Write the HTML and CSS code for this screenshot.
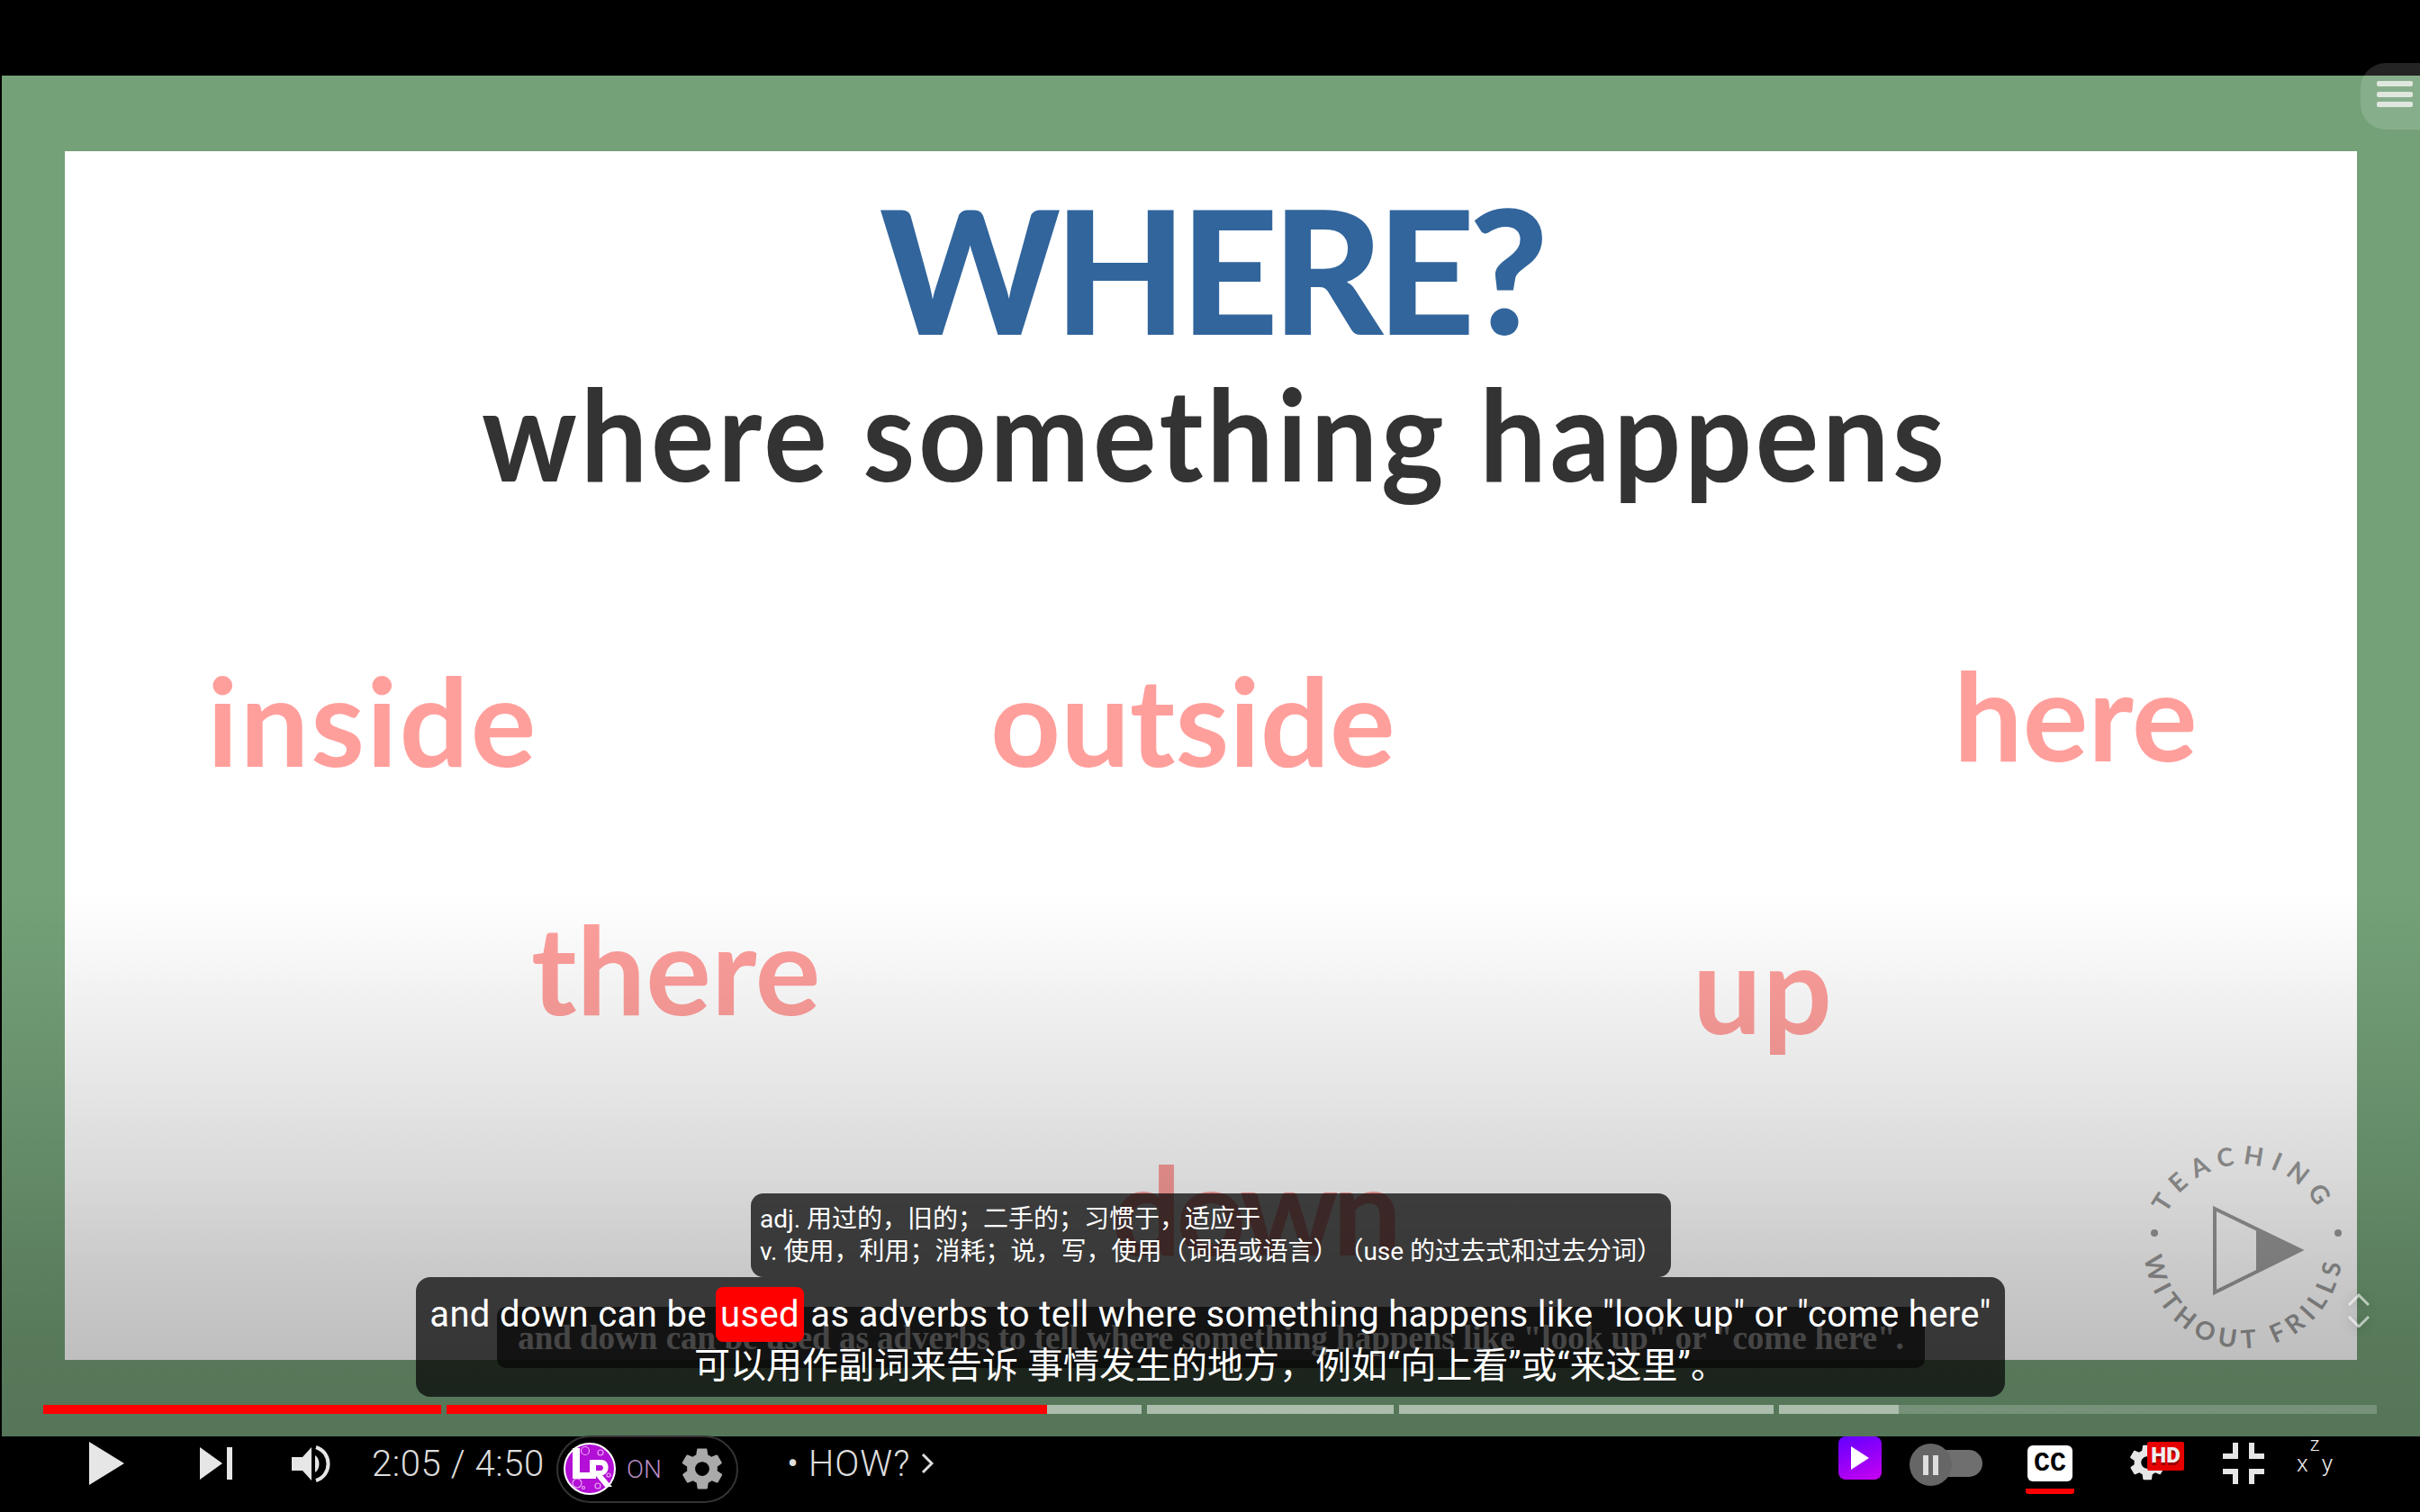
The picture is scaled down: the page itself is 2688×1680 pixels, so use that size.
FILE: index.html
```html
<!DOCTYPE html>
<html lang="en">
<head>
    <meta charset="UTF-8">
    <meta name="viewport" content="width=device-width, initial-scale=1.0">
    <title>Adverbs of place - video player</title>
    <link rel="stylesheet" href="styles.css">
</head>
<body>
    <div class="top-bar"></div>

    <div class="video">
        <div class="slide">
            <h1 class="slide-title">WHERE?</h1>
            <h2 class="slide-sub">where something happens</h2>
            <span class="word word-inside">inside</span>
            <span class="word word-outside">outside</span>
            <span class="word word-here">here</span>
            <span class="word word-there">there</span>
            <span class="word word-up">up</span>
            <span class="word word-down">down</span>

            <svg class="channel-logo" viewBox="0 0 240 240">
                <defs>
                    <path id="arc-top" d="M 26 120 A 94 94 0 0 1 214 120"></path>
                    <path id="arc-bottom" d="M 10 120 A 110 110 0 0 0 230 120"></path>
                </defs>
                <text class="logo-text logo-top"><textPath href="#arc-top" startOffset="50%" text-anchor="middle">TEACHING</textPath></text>
                <text class="logo-text logo-bottom"><textPath href="#arc-bottom" startOffset="50%" text-anchor="middle">WITHOUT FRILLS</textPath></text>
                <circle cx="21" cy="102" r="4" fill="#9a9a9a"></circle>
                <circle cx="225" cy="102" r="4" fill="#9a9a9a"></circle>
                <path d="M88 75 L183 121 L88 168 Z" fill="none" stroke="#9a9a9a" stroke-width="4"></path>
                <path d="M134 98 L183 121 L134 145 Z" fill="#9a9a9a"></path>
            </svg>
        </div>

        <div class="shade"></div>

        <div class="native-caption">and down can be used as adverbs to tell where something happens like "look up" or "come here".</div>

        <div class="tooltip">
            <div>adj. 用过的，旧的；二手的；习惯于，适应于</div>
            <div>v. 使用，利用；消耗；说，写，使用（词语或语言）（use 的过去式和过去分词）</div>
        </div>

        <div class="caption">
            <div class="caption-en">and down can be <span class="word-hit">used</span> as adverbs to tell where something happens like "look up" or "come here"</div>
            <div class="caption-zh">可以用作副词来告诉 事情发生的地方，例如“向上看”或“来这里”。</div>
        </div>

        <div class="menu-btn">
            <span class="menu-line"></span>
            <span class="menu-line"></span>
            <span class="menu-line"></span>
        </div>

        <svg class="resize-arrows" viewBox="0 0 24 38">
            <path d="M1 13 L12 2 L23 13"></path>
            <path d="M1 26 L12 37 L23 26"></path>
        </svg>

        <div class="progress">
            <div class="segment seg-1"></div>
            <div class="segment seg-2"></div>
            <div class="segment seg-3"></div>
            <div class="segment seg-4"></div>
            <div class="segment seg-5"><div class="buffer" style="width: 20%"></div></div>
        </div>
    </div>

    <div class="controls">
        <svg class="ctl ctl-play" viewBox="0 0 39 48"><path d="M0 0 L39 24 L0 48 Z"></path></svg>
        <svg class="ctl ctl-next" viewBox="0 0 36 36"><path d="M0 0 L25 18 L0 36 Z M30 0 H36 V36 H30 Z"></path></svg>
        <svg class="ctl ctl-volume" viewBox="0 0 43 41">
            <path d="M0 13 H12 L22 2 V39 L12 28 H0 Z M26 11 C32 15 32 26 26 30 Z"></path>
            <path class="vol-arc" d="M27 2 C45 8 45 33 27 39"></path>
        </svg>
        <span class="time">2:05 / 4:50</span>

        <div class="lr-pill">
            <svg class="lr-logo" viewBox="0 0 58 58">
                <circle cx="29" cy="29" r="28" fill="#b30fd6" stroke="#fff" stroke-width="2"></circle>
                <g fill="none" stroke="#e6a9f0" stroke-width="1.200">
                    <circle cx="24" cy="9" r="4.500"></circle>
                    <circle cx="41" cy="11" r="3"></circle>
                    <circle cx="15" cy="45" r="5"></circle>
                    <circle cx="22" cy="50" r="1.500"></circle>
                    <circle cx="38" cy="48" r="3"></circle>
                    <circle cx="50" cy="36" r="2"></circle>
                </g>
                <path d="M10 6 H18 V33 H36 V40 H10 Z" fill="#fff"></path>
                <path d="M29 19 H42 C52 19 52 35 43 36 L54 49 H46 L36 37 V40 H29 Z M36 25 V31 H41 C45 31 45 25 41 25 Z" fill="#fff" fill-rule="evenodd"></path>
            </svg>
            <span class="lr-on">ON</span>
            <svg class="lr-gear" viewBox="0 0 24 24"><path d="M19.4 13c.1-.3.1-.7.1-1s0-.7-.1-1l2.100-1.600c.2-.2.2-.4.1-.6l-2-3.500c-.1-.2-.4-.3-.6-.2l-2.500 1c-.5-.4-1.100-.7-1.700-1l-.4-2.700c0-.2-.2-.4-.5-.4h-4c-.3 0-.5.2-.5.4l-.4 2.700c-.6.3-1.200.6-1.700 1l-2.500-1c-.2-.1-.5 0-.6.2l-2 3.500c-.1.2-.1.4.1.6L4.600 11c-.1.3-.1.7-.1 1s0 .7.1 1l-2.100 1.600c-.2.2-.2.4-.1.600l2 3.500c.1.2.4.3.6.2l2.500-1c.5.4 1.100.7 1.700 1l.4 2.700c0 .2.2.4.5.4h4c.3 0 .5-.2.5-.4l.4-2.700c.6-.3 1.200-.6 1.700-1l2.500 1c.2.1.5 0 .6-.2l2-3.500c.1-.2.1-.4-.1-.6L19.400 13zM12 15.500c-1.900 0-3.500-1.600-3.500-3.500s1.600-3.500 3.500-3.500 3.500 1.600 3.500 3.500-1.600 3.500-3.500 3.500z" fill-rule="evenodd"></path></svg>
        </div>

        <span class="chapter"><span class="chapter-dot">•</span>HOW?<svg class="chapter-arrow" viewBox="0 0 14 24"><path d="M2 2 L12 12 L2 22"></path></svg></span>

        <div class="controls-right">
            <div class="ext-btn"><svg viewBox="0 0 20 26"><path d="M0 0 L20 13 L0 26 Z"></path></svg></div>

            <div class="autoplay">
                <div class="autoplay-track"></div>
                <div class="autoplay-knob"><span class="pause-bar"></span><span class="pause-bar"></span></div>
            </div>

            <div class="cc-btn"><span class="cc-label">CC</span></div>

            <div class="hd-btn">
                <svg class="hd-gear" viewBox="0 0 24 24"><path d="M19.4 13c.1-.3.1-.7.1-1s0-.7-.1-1l2.100-1.600c.2-.2.2-.4.1-.6l-2-3.500c-.1-.2-.4-.3-.6-.2l-2.500 1c-.5-.4-1.100-.7-1.700-1l-.4-2.700c0-.2-.2-.4-.5-.4h-4c-.3 0-.5.2-.5.4l-.4 2.700c-.6.3-1.200.6-1.700 1l-2.500-1c-.2-.1-.5 0-.6.2l-2 3.500c-.1.2-.1.4.1.6L4.600 11c-.1.3-.1.7-.1 1s0 .7.1 1l-2.100 1.600c-.2.2-.2.4-.1.600l2 3.500c.1.2.4.3.6.2l2.500-1c.5.4 1.100.7 1.700 1l.4 2.700c0 .2.2.4.5.4h4c.3 0 .5-.2.5-.4l.4-2.700c.6-.3 1.200-.6 1.700-1l2.500 1c.2.1.5 0 .6-.2l2-3.500c.1-.2.1-.4-.1-.6L19.400 13zM12 15.500c-1.900 0-3.500-1.600-3.500-3.500s1.600-3.500 3.500-3.500 3.500 1.600 3.500 3.500-1.600 3.500-3.500 3.500z" fill-rule="evenodd"></path></svg>
                <span class="hd-badge">HD</span>
            </div>

            <svg class="ctl ctl-exit" viewBox="0 0 46 46"><path d="M11 0 H17 V18 H0 V12 H11 Z M29 0 H35 V12 H46 V18 H29 Z M0 29 H17 V46 H11 V35 H0 Z M29 29 H46 V35 H35 V46 H29 Z"></path></svg>

            <div class="xy-btn">
                <span class="xy-top">z</span>
                <span class="xy-row"><span>x</span><span>y</span></span>
            </div>
        </div>
    </div>
</body>
</html>
```

FILE: styles.css
```css
* {
    box-sizing: border-box;
}

body {
    margin: 0;
    width: 2688px;
    height: 1680px;
    display: flex;
    flex-direction: column;
    background-color: #000;
    font-family: Roboto, 'Noto Sans CJK SC', sans-serif;
    overflow: hidden;
}

.top-bar {
    height: 84px;
    background-color: #000;
}

/* Video frame */
.video {
    position: relative;
    height: 1512px;
    padding: 84px 70px 85px 70px;
    background-color: #74a178;
    border-left: 2px solid #000;
}

.slide {
    position: relative;
    width: 2546px;
    height: 1343px;
    background-color: #fff;
}

.slide-title,
.slide-sub,
.word {
    position: absolute;
    margin: 0;
    font-family: Lato, sans-serif;
    white-space: nowrap;
}

.slide-title {
    left: 905px;
    top: 16px;
    font-size: 190px;
    font-weight: 900;
    line-height: 1.2;
    letter-spacing: -7px;
    color: #31659c;
}

.slide-sub {
    left: 463px;
    top: 227px;
    font-size: 142px;
    font-weight: 700;
    line-height: 1.2;
    letter-spacing: 4px;
    color: #333;
    transform: scaleX(0.93);
    transform-origin: left center;
}

.word {
    font-size: 136px;
    font-weight: 700;
    line-height: 1.2;
    letter-spacing: 0;
    color: #ff9f9c;
}

.word-inside { left: 158px; top: 550px; letter-spacing: 2px; }
.word-outside { left: 1028px; top: 550px; }
.word-here { left: 2098px; top: 544px; }
.word-there { left: 518px; top: 826px; }
.word-up { left: 1808px; top: 847px; letter-spacing: 1px; }
.word-down { left: 1163px; top: 1093px; letter-spacing: -6px; }

.channel-logo {
    position: absolute;
    left: 2300px;
    top: 1100px;
    width: 240px;
    height: 240px;
}

.logo-text {
    font-family: Lato, sans-serif;
    font-size: 28px;
    font-weight: 700;
    fill: #9a9a9a;
}

.logo-top {
    letter-spacing: 9px;
}

.logo-bottom {
    letter-spacing: 7px;
}

/* bottom darkening of the player */
.shade {
    position: absolute;
    left: -2px;
    right: 0;
    top: 0;
    bottom: 0;
    background: linear-gradient(to bottom, rgba(0, 0, 0, 0) 60%, rgba(0, 0, 0, 0.14) 80%, rgba(0, 0, 0, 0.21) 88%, rgba(0, 0, 0, 0.25) 94%, rgba(0, 0, 0, 0.27) 100%);
}

/* Subtitles */
.native-caption {
    position: absolute;
    left: 550px;
    top: 1368px;
    width: 1586px;
    height: 68px;
    padding-top: 13px;
    background-color: rgba(8, 8, 8, 0.75);
    border-radius: 10px;
    font-family: 'Liberation Serif', serif;
    font-size: 37px;
    font-weight: 700;
    color: #fff;
    text-align: center;
    white-space: nowrap;
}

.caption {
    position: absolute;
    left: 460px;
    top: 1335px;
    width: 1765px;
    height: 133px;
    padding-top: 11px;
    background-color: rgba(8, 8, 8, 0.75);
    border-radius: 16px;
    color: #fff;
    text-align: center;
    white-space: nowrap;
}

.caption-en {
    font-family: Roboto, sans-serif;
    font-size: 40px;
    font-weight: 400;
    line-height: 61px;
    letter-spacing: 0.36px;
}

.word-hit {
    display: inline-block;
    margin-right: -3px;
    padding: 0 5px;
    background-color: #f00;
    border-radius: 8px;
}

.caption-zh {
    font-family: Roboto, 'Noto Sans CJK SC', sans-serif;
    font-size: 40px;
    line-height: 54px;
    text-spacing-trim: space-all;
}

.tooltip {
    position: absolute;
    left: 832px;
    top: 1242px;
    width: 1022px;
    height: 93px;
    padding: 11px 10px 0;
    background-color: rgba(8, 8, 8, 0.75);
    border-radius: 14px;
    font-family: Roboto, 'Noto Sans CJK SC', sans-serif;
    font-size: 28px;
    line-height: 36px;
    color: #fff;
    white-space: nowrap;
    text-spacing-trim: space-all;
}

.menu-btn {
    position: absolute;
    right: 0;
    top: -14px;
    width: 66px;
    height: 74px;
    padding: 20px 8px 0 18px;
    display: flex;
    flex-direction: column;
    gap: 5.500px;
    background-color: rgba(255, 255, 255, 0.14);
    border-radius: 28px 0 0 28px;
}

.menu-line {
    height: 6px;
    background-color: #dfe7df;
    border-radius: 2px;
}

.resize-arrows {
    position: absolute;
    left: 2606px;
    top: 1353px;
    width: 24px;
    height: 38px;
    fill: none;
    stroke: rgba(255, 255, 255, 0.6);
    stroke-width: 3;
    filter: drop-shadow(0 2px 6px rgba(0, 0, 0, 0.4));
}

/* Chapter progress bar */
.progress {
    position: absolute;
    left: 46px;
    top: 1477px;
    display: flex;
    gap: 6px;
    height: 10px;
}

.segment {
    display: flex;
    height: 10px;
    background-color: rgba(255, 255, 255, 0.2);
}

.seg-1 { width: 442px; background-color: #f00; }
.seg-2 { width: 772px; background: linear-gradient(to right, #f00 667px, #abbdac 667px); }
.seg-3 { width: 274px; background-color: #abbdac; }
.seg-4 { width: 416px; background-color: #abbdac; }
.seg-5 { width: 664px; }

.buffer {
    height: 100%;
    background-color: #abbdac;
}

/* Bottom controls */
.controls {
    position: relative;
    display: flex;
    align-items: center;
    height: 84px;
    padding-left: 99px;
    color: #ddd;
}

.ctl {
    flex: none;
    fill: #e6e6e6;
}

.ctl-play {
    width: 39px;
    height: 48px;
    margin-top: -24px;
}

.ctl-next {
    width: 36px;
    height: 36px;
    margin-left: 84px;
    margin-top: -24px;
}

.ctl-volume {
    width: 43px;
    height: 41px;
    margin-left: 66px;
    margin-top: -24px;
}

.vol-arc {
    fill: none;
    stroke: #e6e6e6;
    stroke-width: 4;
}

.time {
    flex: none;
    width: 190px;
    margin-left: 46px;
    margin-top: -24px;
    font-size: 40px;
    font-weight: 300;
    letter-spacing: 0.6px;
    color: #ddd;
    white-space: nowrap;
}

.lr-pill {
    flex: none;
    display: flex;
    align-items: center;
    width: 202px;
    height: 75px;
    margin-left: 15px;
    margin-top: -12px;
    padding-left: 6px;
    border: 2px solid #333;
    border-radius: 38px;
}

.lr-logo {
    flex: none;
    width: 58px;
    height: 58px;
}

.lr-on {
    margin-left: 12px;
    font-size: 28px;
    font-weight: 300;
    color: #b88bc0;
}

.lr-gear {
    flex: none;
    width: 54px;
    height: 54px;
    margin-left: 18px;
    fill: #aaa;
}

.chapter {
    display: flex;
    align-items: center;
    margin-left: 54px;
    margin-top: -24px;
    font-size: 40px;
    font-weight: 300;
    letter-spacing: 1px;
    white-space: nowrap;
}

.chapter-dot {
    margin-right: 10px;
}

.chapter-arrow {
    width: 14px;
    height: 24px;
    margin-left: 12px;
    fill: none;
    stroke: #ddd;
    stroke-width: 3;
}

.controls-right {
    position: absolute;
    left: 0;
    right: 0;
    top: 0;
    bottom: 0;
}

.ext-btn {
    position: absolute;
    left: 2042px;
    top: 0;
    width: 48px;
    height: 48px;
    display: flex;
    align-items: center;
    justify-content: center;
    background: linear-gradient(160deg, #6200ff, #c800f0);
    border-radius: 8px;
}

.ext-btn svg {
    width: 20px;
    height: 26px;
    fill: #fff;
}

.autoplay {
    position: absolute;
    left: 2121px;
    top: 8px;
    width: 81px;
    height: 47px;
}

.autoplay-track {
    position: absolute;
    left: 35px;
    top: 7px;
    width: 46px;
    height: 30px;
    background-color: #6f6f6f;
    border-radius: 0 15px 15px 0;
}

.autoplay-knob {
    position: absolute;
    left: 0;
    top: 0;
    width: 47px;
    height: 47px;
    display: flex;
    align-items: center;
    justify-content: center;
    gap: 5px;
    background-color: #666;
    border-radius: 50%;
}

.pause-bar {
    width: 6px;
    height: 22px;
    background-color: #ddd;
}

.cc-btn {
    position: absolute;
    left: 2250px;
    top: 10px;
    width: 54px;
    height: 54px;
    border-bottom: 6px solid #f00;
    border-radius: 0 0 3px 3px;
}

.cc-label {
    display: block;
    width: 50px;
    height: 40px;
    margin-left: 2px;
    background-color: #fff;
    border-radius: 6px;
    font-family: 'Liberation Mono', monospace;
    font-size: 30px;
    font-weight: 700;
    line-height: 40px;
    color: #000;
    text-align: center;
}

.hd-btn {
    position: absolute;
    left: 2362px;
    top: 6px;
    width: 64px;
    height: 46px;
}

.hd-gear {
    width: 46px;
    height: 46px;
    fill: #e6e6e6;
}

.hd-badge {
    position: absolute;
    left: 23px;
    top: 0;
    width: 41px;
    height: 32px;
    background-color: #e60000;
    border-radius: 2px;
    font-size: 24px;
    font-weight: 900;
    line-height: 30px;
    color: #eee;
    text-align: center;
    text-shadow: 0 3px 0 #900;
}

.ctl-exit {
    position: absolute;
    left: 2469px;
    top: 7px;
    width: 46px;
    height: 46px;
}

.xy-btn {
    position: absolute;
    left: 2549px;
    top: 0;
    width: 44px;
    height: 44px;
    font-family: Roboto, sans-serif;
    font-weight: 300;
    color: #eee;
    text-align: center;
}

.xy-top {
    display: block;
    height: 18px;
    font-size: 22px;
    line-height: 18px;
}

.xy-row {
    display: flex;
    justify-content: space-between;
    padding: 0 2px;
    margin-top: -3px;
    font-size: 26px;
    line-height: 30px;
}
```
